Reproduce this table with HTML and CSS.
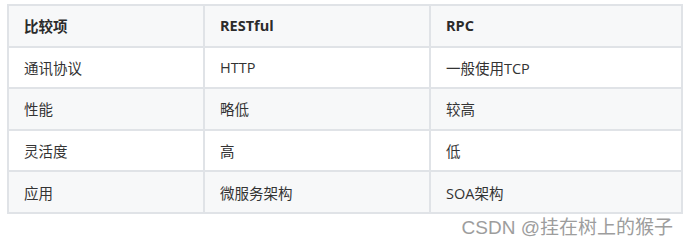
FILE: index.html
```html
<!DOCTYPE html>
<html lang="zh">
<head>
<meta charset="utf-8">
<link rel="stylesheet" href="styles.css">
</head>
<body>
<div class="page">
  <table class="cmp">
    <thead>
      <tr><th class="c1">比较项</th><th class="c2">RESTful</th><th class="c3">RPC</th></tr>
    </thead>
    <tbody>
      <tr><td>通讯协议</td><td>HTTP</td><td>一般使用TCP</td></tr>
      <tr class="alt"><td>性能</td><td>略低</td><td>较高</td></tr>
      <tr><td>灵活度</td><td>高</td><td>低</td></tr>
      <tr class="alt"><td>应用</td><td>微服务架构</td><td>SOA架构</td></tr>
    </tbody>
  </table>
  <div class="mark">CSDN @挂在树上的猴子</div>
</div>
</body>
</html>
```
FILE: styles.css
```css
html, body {
  margin: 0;
  padding: 0;
  background: #ffffff;
}
.page {
  padding: 4px 0 0 7px;
  font-family: "Open Sans", "Noto Sans CJK SC", sans-serif;
}
.cmp {
  border-collapse: collapse;
  width: 676px;
  table-layout: fixed;
  font-size: 14.5px;
  color: #333333;
}
.cmp th, .cmp td {
  border: 2px solid #e0e3e7;
  height: 41.6px;
  padding: 0 15px;
  text-align: left;
  vertical-align: middle;
  box-sizing: border-box;
}
.cmp th {
  font-weight: 700;
  color: #2b2b2b;
  background: #f7f8f9;
}
.c1 { width: 196px; }
.c2 { width: 226px; }
.cmp tr.alt td { background: #f7f8f9; }
.mark {
  width: 676px;
  text-align: right;
  box-sizing: border-box;
  padding-right: 10px;
  margin-top: 2px;
  font-family: "Liberation Sans", "Noto Sans CJK SC", sans-serif;
  font-size: 19px;
  line-height: 24px;
  color: #9d9d9d;
}
```
